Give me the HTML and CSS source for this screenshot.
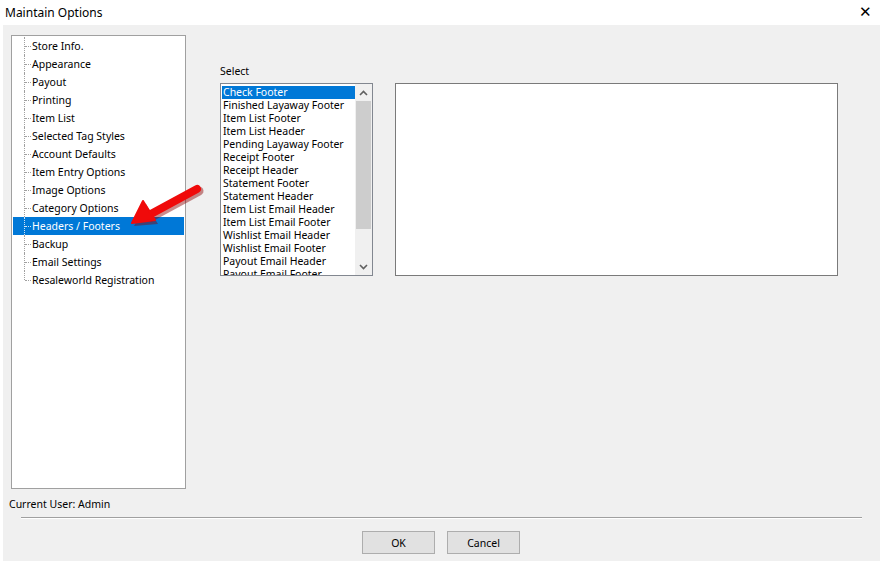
FILE: index.html
```html
<!DOCTYPE html>
<html lang="en">
  <head>
    <meta charset="UTF-8" />
    <title>Maintain Options</title>
    <link rel="stylesheet" href="styles.css">
  </head>
  <body>
    <div class="window">
      <div class="titlebar">
        <span class="title">Maintain Options</span>
        <span class="close">&#x2715;</span>
      </div>
      <div class="client">
        <div class="main">
          <div class="left">
            <ul class="tree">
              <li>Store Info.</li>
              <li>Appearance</li>
              <li>Payout</li>
              <li>Printing</li>
              <li>Item List</li>
              <li>Selected Tag Styles</li>
              <li>Account Defaults</li>
              <li>Item Entry Options</li>
              <li>Image Options</li>
              <li>Category Options</li>
              <li class="selected">Headers / Footers</li>
              <li>Backup</li>
              <li>Email Settings</li>
              <li class="last">Resaleworld Registration</li>
            </ul>
            <svg class="arrow" width="80" height="50" viewBox="0 0 80 50">
              <g transform="translate(2,2)">
                <path d="M70 6 L22 32" stroke="#8a0000" stroke-opacity="0.45" stroke-width="9" stroke-linecap="round" />
                <path d="M5 41 L17 19 L29 39 Z" fill="#8a0000" fill-opacity="0.45" />
              </g>
              <path d="M70 6 L22 32" stroke="#f00a0a" stroke-width="8" stroke-linecap="round" />
              <path d="M5 40 L16 18 L28 37 Z" fill="#f00a0a" stroke="#f00a0a" stroke-width="2" stroke-linejoin="round" />
            </svg>
            <div class="user">Current User: Admin</div>
          </div>
          <div class="right">
            <div class="select-label">Select</div>
            <div class="row">
              <div class="listbox">
                <ul class="items">
                  <li class="selected">Check Footer</li>
                  <li>Finished Layaway Footer</li>
                  <li>Item List Footer</li>
                  <li>Item List Header</li>
                  <li>Pending Layaway Footer</li>
                  <li>Receipt Footer</li>
                  <li>Receipt Header</li>
                  <li>Statement Footer</li>
                  <li>Statement Header</li>
                  <li>Item List Email Header</li>
                  <li>Item List Email Footer</li>
                  <li>Wishlist Email Header</li>
                  <li>Wishlist Email Footer</li>
                  <li>Payout Email Header</li>
                  <li>Payout Email Footer</li>
                </ul>
                <div class="scrollbar">
                  <div class="sb-btn">
                    <svg width="9" height="6" viewBox="0 0 9 6"><path d="M1 5 L4.5 1.5 L8 5" fill="none" stroke="#606060" stroke-width="1.6" /></svg>
                  </div>
                  <div class="sb-track"><div class="sb-thumb"></div></div>
                  <div class="sb-btn">
                    <svg width="9" height="6" viewBox="0 0 9 6"><path d="M1 1 L4.5 4.5 L8 1" fill="none" stroke="#606060" stroke-width="1.6" /></svg>
                  </div>
                </div>
              </div>
              <div class="textbox"></div>
            </div>
          </div>
        </div>
        <div class="separator"></div>
        <div class="buttons">
          <button>OK</button>
          <button>Cancel</button>
        </div>
      </div>
    </div>
  </body>
</html>
```

FILE: styles.css
```css
body {
  margin: 0;
  padding: 0;
  background-color: white;
  font-family: "Noto Sans", "Liberation Sans", sans-serif;
  font-size: 10.5px;
  color: #000;
}

.window {
  width: 880px;
  height: 564px;
  display: flex;
  flex-direction: column;
}

.titlebar {
  height: 25px;
  display: flex;
  align-items: center;
  justify-content: space-between;
  padding: 0 8px 0 5px;
  font-size: 12px;
}

.close {
  font-size: 15px;
  line-height: 1;
  margin-top: -2px;
}

.client {
  background-color: #f0f0f0;
  margin: 0 0 3px 3px;
  flex: 1;
  display: flex;
  flex-direction: column;
}

.main {
  display: flex;
  flex: 1;
}

.left {
  position: relative;
  padding: 10px 0 0 8px;
  display: flex;
  flex-direction: column;
}

.tree {
  list-style: none;
  margin: 0;
  padding: 1px 1px 0 1px;
  width: 171px;
  height: 451px;
  background-color: white;
  border: 1px solid #a0a0a0;
}

.tree li {
  position: relative;
  height: 18px;
  line-height: 18px;
  padding-left: 19px;
  white-space: nowrap;
}

.tree li::before {
  content: "";
  position: absolute;
  left: 11px;
  top: 0;
  height: 18px;
  border-left: 1px dotted #a0a0a0;
}

.tree li.last::before {
  height: 9px;
}

.tree li::after {
  content: "";
  position: absolute;
  left: 12px;
  top: 9px;
  width: 6px;
  border-top: 1px dotted #a0a0a0;
}

.tree li.selected {
  background-color: #0078d7;
  color: white;
}

.tree li.selected::before,
.tree li.selected::after {
  border-color: #cfe3f5;
}

.arrow {
  position: absolute;
  left: 124px;
  top: 158px;
}

.user {
  margin: 8px 0 0 -2px;
}

.right {
  padding: 39px 0 0 34px;
}

.select-label {
  height: 14px;
  line-height: 14px;
  margin-bottom: 5px;
}

.row {
  display: flex;
  gap: 22px;
}

.listbox {
  width: 151px;
  height: 191px;
  background-color: white;
  border: 1px solid #828790;
  display: flex;
  overflow: hidden;
}

.items {
  list-style: none;
  margin: 0;
  padding: 2px 0 0 1px;
  flex: 1;
  overflow: hidden;
}

.items li {
  height: 13px;
  line-height: 13px;
  padding-left: 1px;
  white-space: nowrap;
}

.items li.selected {
  background-color: #0078d7;
  color: white;
}

.scrollbar {
  width: 17px;
  display: flex;
  flex-direction: column;
  background-color: #f0f0f0;
}

.sb-btn {
  height: 17px;
  display: flex;
  align-items: center;
  justify-content: center;
}

.sb-track {
  flex: 1;
  padding: 0 1px;
}

.sb-thumb {
  height: 128px;
  background-color: #cdcdcd;
}

.textbox {
  width: 441px;
  height: 191px;
  background-color: white;
  border: 1px solid #7a7a7a;
}

.separator {
  margin: 0 18px 0 18px;
  border-top: 1px solid #a0a0a0;
  border-bottom: 1px solid white;
}

.buttons {
  display: flex;
  justify-content: center;
  gap: 12px;
  padding: 12px 1px 7px 0;
}

button {
  width: 73px;
  height: 23px;
  background-color: #e1e1e1;
  border: 1px solid #adadad;
  font-family: "Noto Sans", "Liberation Sans", sans-serif;
  font-size: 10.5px;
  color: #000;
  padding: 0;
}
```
